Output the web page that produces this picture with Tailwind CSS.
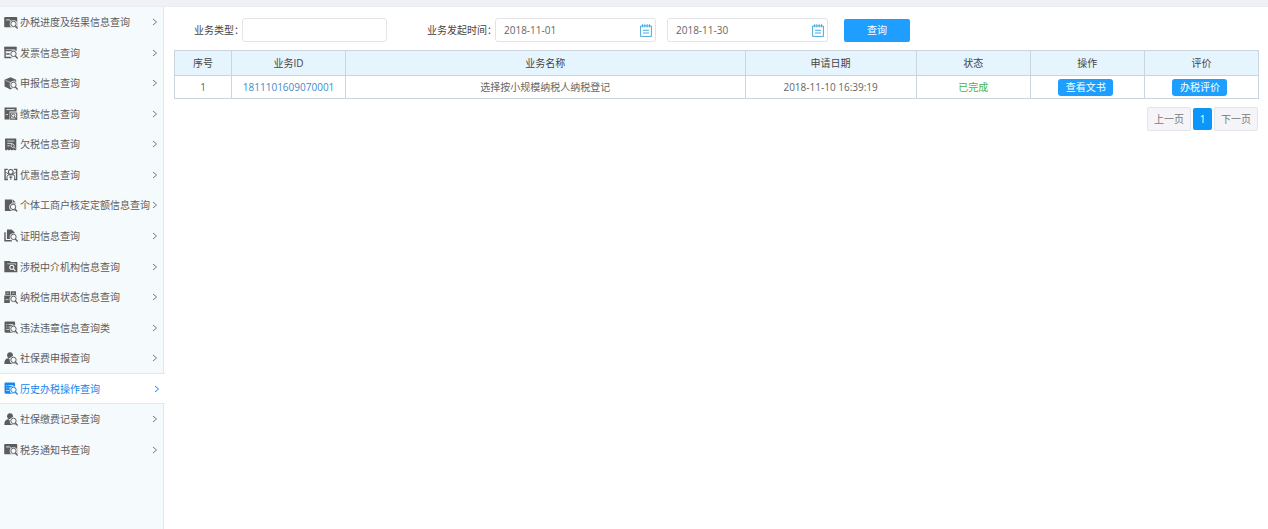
<!DOCTYPE html>
<html lang="zh-CN">
<head>
<meta charset="utf-8">
<meta name="viewport" content="width=device-width, initial-scale=1">
<title>历史办税操作查询</title>
<script src="https://cdn.jsdelivr.net/npm/@tailwindcss/browser@4"></script>
</head>
<body class="flex min-h-screen flex-col bg-white font-['Open_Sans','Noto_Sans_CJK_SC',sans-serif] text-[10px] leading-4 text-[#555]">
<svg class="hidden" aria-hidden="true">
  <symbol id="chevron" viewBox="0 0 6 8"><path d="M1 1l3.5 3L1 7" fill="none" stroke="currentColor" stroke-width="1"/></symbol>
  <symbol id="lens" viewBox="0 0 13 12"><circle cx="8.8" cy="7.3" r="3.5" fill="#f5fafd"/><circle cx="8.8" cy="7.3" r="2.5" fill="#f5fafd" stroke="currentColor" stroke-width=".9"/><path d="M10.5 9.2l2.2 2.4" stroke="currentColor" stroke-width="1.2"/></symbol>
  <symbol id="card" viewBox="0 0 13 12"><path fill="currentColor" d="M1 .8h10.5q.8 0 .8.8v8q0 .8-.8.8H1q-.8 0-.8-.8v-8Q.2.8 1 .8z"/><path d="M2 3.6h3.2l1.2 1" stroke="#f5fafd" stroke-width=".8" fill="none"/><use href="#lens"/></symbol>
  <symbol id="invoice" viewBox="0 0 13 12"><path fill="none" stroke="currentColor" stroke-width="1.3" d="M11 4.500V1.400H1v9.200h6M1 4.200h9M2 7.400h4"/><path d="M.4.8h11.200v2.300H.4z" fill="currentColor"/><use href="#lens"/></symbol>
  <symbol id="cube" viewBox="0 0 13 12"><path fill="currentColor" d="M6 .2l5.3 2.3v6L6 11.5.5 8.8V2.5z"/><path d="M1.500 3.200L6 5.100l4.500-1.900" stroke="#f5fafd" stroke-width=".5" fill="none"/><use href="#lens"/></symbol>
  <symbol id="payment" viewBox="0 0 13 12"><path fill="currentColor" d="M.5.4h11.200v3.800H.5zM.5 4.200h4.700v7.300H.5z"/><path d="M2.200 2.400h7.600M1.800 7h1.800" stroke="#f5fafd" stroke-width=".8"/><path d="M6.200 5.500h5.600v5.700H6.200z" fill="none" stroke="currentColor"/><circle cx="8.600" cy="8" r="1.500" fill="none" stroke="currentColor" stroke-width=".9"/><path d="M9.600 9.100l2.400 2.400" stroke="currentColor"/></symbol>
  <symbol id="arrears" viewBox="0 0 13 12"><path fill="currentColor" d="M1 .4h10.400v10.400l-1.200.8-1.300-1-1.500 1-1.400-1-1.400 1-1.300-1-1.100 1L1 10.800z"/><path d="M3 2.800h6.400M3 5h5M3 7.200h2.500" stroke="#f5fafd" stroke-width=".7"/><circle cx="8" cy="7.200" r="1.500" fill="currentColor" stroke="#f5fafd" stroke-width=".7"/><path d="M9 8.300l1.600 1.600" stroke="#f5fafd" stroke-width=".7"/></symbol>
  <symbol id="benefit" viewBox="0 0 13 12"><path d="M3.500 1.200H1v9.600h2.500M9.200 1.200h2.500v9.600H9.200" fill="none" stroke="currentColor" stroke-width="1.300"/><circle cx="6.300" cy="3.600" r="2.200" fill="none" stroke="currentColor"/><path d="M2.800 10.800V8q0-1.700 1.800-1.700h3.500q1.800 0 1.800 1.700v2.800M2 4l2.500 2M10.800 4L8 6M4.800 8.500h3M6.300 7v4" fill="none" stroke="currentColor" stroke-width=".9"/></symbol>
  <symbol id="document" viewBox="0 0 13 12"><path fill="currentColor" d="M.8.4h6.800v3h3V11.200H.8z"/><path fill="currentColor" d="M8.100.4l2.600 2.500H8.100z"/><use href="#lens" x="-.4"/></symbol>
  <symbol id="proof" viewBox="0 0 13 12"><path fill="currentColor" d="M2.700.4H7l2.800 2.600v6.300H2.700z"/><path d="M.9 3v7.900h6.500" stroke="currentColor" stroke-width="1.300" fill="none"/><use href="#lens"/></symbol>
  <symbol id="folder" viewBox="0 0 13 12"><path fill="currentColor" d="M.3.800h5.200l.9 1.100h6v9.500H.3z"/><path d="M3 3.500h7.700v1" stroke="#f5fafd" stroke-width=".6" fill="none"/><circle cx="7.300" cy="6.700" r="1.900" fill="none" stroke="#f5fafd" stroke-width="1"/><path d="M8.700 8.100l1.900 2" stroke="#f5fafd" stroke-width="1"/></symbol>
  <symbol id="credit" viewBox="0 0 13 12"><path fill="currentColor" d="M1.200.2h4.600v3.400H1.200zM6.400.2h4.700v3.400H6.400zM.2 4.100h11.300v1.800H.2zM.2 5.900h5.200v5.300H.2z"/><path d="M2.400 2h2M7.400 2h2.400M1.400 8h2.800" stroke="#f5fafd" stroke-width=".6"/><use href="#lens"/></symbol>
  <symbol id="record" viewBox="0 0 13 12"><path fill="currentColor" d="M1.500.5h7.800q1 0 1 1v9.300H1.500q-1 0-1-1V1.500q0-1 1-1z"/><path d="M2.100 3.200h1M4.200 3.200h4.400M2.100 5.500h1M4.200 5.500h1.600M2.100 7.800h2.600" stroke="#f5fafd" stroke-width=".7"/><use href="#lens"/></symbol>
  <symbol id="person" viewBox="0 0 13 12"><circle cx="5.600" cy="2.900" r="2.700" fill="currentColor"/><path fill="currentColor" d="M.3 11Q.2 6.300 4 5.600l1.600 1.400L7.300 5.600q3.400.6 3.400 5.400z"/><use href="#lens"/></symbol>
  <symbol id="calendar" viewBox="0 0 12 13"><path d="M.6 2h10.800v10.400H.6zM2.600.2v3.200M4.900.2v3.200M7.200.2v3.200M9.500.2v3.200M3 6.300h6M3 9h6" fill="none" stroke="currentColor" stroke-width="1"/></symbol>
</svg>

<header class="h-[7px] border-b border-[#e9edf2] bg-[#eff1f6]"></header>
<div class="flex flex-1">
  <nav class="w-41 shrink-0 bg-[linear-gradient(to_right,#f5fafd_163px,#dfe6ec_163px)]" aria-label="查询菜单">
    <ul class="grid h-[458px] auto-rows-fr text-[#5c5c5c]">
      <li class="flex"><a href="#" class="flex flex-1 items-center gap-0.5 pl-1 pr-[7px] whitespace-nowrap"><svg class="h-[13px] w-3.5"><use href="#card"/></svg><span class="flex-1">办税进度及结果信息查询</span><svg class="h-2 w-1.5 text-[#777]"><use href="#chevron"/></svg></a></li>
      <li class="flex"><a href="#" class="flex flex-1 items-center gap-0.5 pl-1 pr-[7px] whitespace-nowrap"><svg class="h-[13px] w-3.5"><use href="#invoice"/></svg><span class="flex-1">发票信息查询</span><svg class="h-2 w-1.5 text-[#777]"><use href="#chevron"/></svg></a></li>
      <li class="flex"><a href="#" class="flex flex-1 items-center gap-0.5 pl-1 pr-[7px] whitespace-nowrap"><svg class="h-[13px] w-3.5"><use href="#cube"/></svg><span class="flex-1">申报信息查询</span><svg class="h-2 w-1.5 text-[#777]"><use href="#chevron"/></svg></a></li>
      <li class="flex"><a href="#" class="flex flex-1 items-center gap-0.5 pl-1 pr-[7px] whitespace-nowrap"><svg class="h-[13px] w-3.5"><use href="#payment"/></svg><span class="flex-1">缴款信息查询</span><svg class="h-2 w-1.5 text-[#777]"><use href="#chevron"/></svg></a></li>
      <li class="flex"><a href="#" class="flex flex-1 items-center gap-0.5 pl-1 pr-[7px] whitespace-nowrap"><svg class="h-[13px] w-3.5"><use href="#arrears"/></svg><span class="flex-1">欠税信息查询</span><svg class="h-2 w-1.5 text-[#777]"><use href="#chevron"/></svg></a></li>
      <li class="flex"><a href="#" class="flex flex-1 items-center gap-0.5 pl-1 pr-[7px] whitespace-nowrap"><svg class="h-[13px] w-3.5"><use href="#benefit"/></svg><span class="flex-1">优惠信息查询</span><svg class="h-2 w-1.5 text-[#777]"><use href="#chevron"/></svg></a></li>
      <li class="flex"><a href="#" class="flex flex-1 items-center gap-0.5 pl-1 pr-[7px] whitespace-nowrap"><svg class="h-[13px] w-3.5 shrink-0"><use href="#document"/></svg><span class="min-w-0 flex-1">个体工商户核定定额信息查询</span><svg class="h-2 w-1.5 shrink-0 text-[#777]"><use href="#chevron"/></svg></a></li>
      <li class="flex"><a href="#" class="flex flex-1 items-center gap-0.5 pl-1 pr-[7px] whitespace-nowrap"><svg class="h-[13px] w-3.5"><use href="#proof"/></svg><span class="flex-1">证明信息查询</span><svg class="h-2 w-1.5 text-[#777]"><use href="#chevron"/></svg></a></li>
      <li class="flex"><a href="#" class="flex flex-1 items-center gap-0.5 pl-1 pr-[7px] whitespace-nowrap"><svg class="h-[13px] w-3.5"><use href="#folder"/></svg><span class="flex-1">涉税中介机构信息查询</span><svg class="h-2 w-1.5 text-[#777]"><use href="#chevron"/></svg></a></li>
      <li class="flex"><a href="#" class="flex flex-1 items-center gap-0.5 pl-1 pr-[7px] whitespace-nowrap"><svg class="h-[13px] w-3.5"><use href="#credit"/></svg><span class="flex-1">纳税信用状态信息查询</span><svg class="h-2 w-1.5 text-[#777]"><use href="#chevron"/></svg></a></li>
      <li class="flex"><a href="#" class="flex flex-1 items-center gap-0.5 pl-1 pr-[7px] whitespace-nowrap"><svg class="h-[13px] w-3.5"><use href="#record"/></svg><span class="flex-1">违法违章信息查询类</span><svg class="h-2 w-1.5 text-[#777]"><use href="#chevron"/></svg></a></li>
      <li class="flex"><a href="#" class="flex flex-1 items-center gap-0.5 pl-1 pr-[7px] whitespace-nowrap"><svg class="h-[13px] w-3.5"><use href="#person"/></svg><span class="flex-1">社保费申报查询</span><svg class="h-2 w-1.5 text-[#777]"><use href="#chevron"/></svg></a></li>
      <li class="flex"><a href="#" aria-current="page" class="flex flex-1 items-center gap-0.5 border-y border-[#e1e7ec] bg-white pl-1 pr-[5px] whitespace-nowrap text-[#1386f0]"><svg class="h-[13px] w-3.5"><use href="#record"/></svg><span class="flex-1">历史办税操作查询</span><svg class="h-2 w-1.5"><use href="#chevron"/></svg></a></li>
      <li class="flex"><a href="#" class="flex flex-1 items-center gap-0.5 pl-1 pr-[7px] whitespace-nowrap"><svg class="h-[13px] w-3.5"><use href="#person"/></svg><span class="flex-1">社保缴费记录查询</span><svg class="h-2 w-1.5 text-[#777]"><use href="#chevron"/></svg></a></li>
      <li class="flex"><a href="#" class="flex flex-1 items-center gap-0.5 pl-1 pr-[7px] whitespace-nowrap"><svg class="h-[13px] w-3.5"><use href="#card"/></svg><span class="flex-1">税务通知书查询</span><svg class="h-2 w-1.5 text-[#777]"><use href="#chevron"/></svg></a></li>
    </ul>
  </nav>

  <main class="min-w-0 flex-1 pt-[11px] pr-[9px] pl-2.5">
    <form class="flex items-center pl-5 text-[#444]">
      <label for="type" class="w-12 whitespace-nowrap">业务类型：</label>
      <input id="type" type="text" class="h-6 w-[145px] rounded-[3px] border border-[#e2e4e8] px-2 outline-none">
      <label for="start" class="ml-10 w-[68px] whitespace-nowrap">业务发起时间：</label>
      <div class="flex h-6 w-[161px] items-center rounded-[3px] border border-[#e2e4e8] pr-[3px] pl-2">
        <input id="start" type="text" value="2018-11-01" class="min-w-0 flex-1 text-[#666] outline-none">
        <button type="button" aria-label="选择开始日期" class="text-[#45aade]"><svg class="h-[13px] w-3"><use href="#calendar"/></svg></button>
      </div>
      <div class="ml-[11px] flex h-6 w-[161px] items-center rounded-[3px] border border-[#e2e4e8] pr-[3px] pl-2">
        <input id="end" type="text" aria-label="结束日期" value="2018-11-30" class="min-w-0 flex-1 text-[#666] outline-none">
        <button type="button" aria-label="选择结束日期" class="text-[#45aade]"><svg class="h-[13px] w-3"><use href="#calendar"/></svg></button>
      </div>
      <button type="submit" class="ml-4 h-[23px] w-[66px] rounded-xs bg-[#1e9fff] text-white">查询</button>
    </form>

    <table class="mt-2 w-full table-fixed border-collapse text-center text-[#666] [&_td]:border [&_td]:border-[#cbd5e0] [&_th]:border [&_th]:border-[#cbd5e0] [&_th]:font-normal">
      <colgroup><col class="w-1/19"><col class="w-2/19"><col class="w-7/19"><col class="w-3/19"><col class="w-2/19"><col class="w-2/19"><col class="w-2/19"></colgroup>
      <thead>
        <tr class="h-[25px] bg-[#e5f4fd] text-[#444]"><th scope="col">序号</th><th scope="col">业务ID</th><th scope="col">业务名称</th><th scope="col">申请日期</th><th scope="col">状态</th><th scope="col">操作</th><th scope="col">评价</th></tr>
      </thead>
      <tbody>
        <tr class="h-[23px]">
          <td>1</td>
          <td><a href="#" class="text-[#428bca]">1811101609070001</a></td>
          <td>选择按小规模纳税人纳税登记</td>
          <td>2018-11-10 16:39:19</td>
          <td class="text-[#44b549]">已完成</td>
          <td class="pr-[3px]"><button type="button" class="mx-auto block h-[17px] w-[55px] rounded-[3px] bg-[#1e9fff] text-white">查看文书</button></td>
          <td class="pr-[3px]"><button type="button" class="mx-auto block h-[17px] w-[55px] rounded-[3px] bg-[#1e9fff] text-white">办税评价</button></td>
        </tr>
      </tbody>
    </table>

    <nav class="mt-2 flex items-center justify-end gap-0.5 pr-px text-[#777]" aria-label="分页">
      <button type="button" class="h-6 w-11 rounded-xs border border-[#e4e5ea] bg-[#f5f5f9]">上一页</button>
      <button type="button" aria-current="page" class="h-[22px] w-[19px] rounded-xs bg-[#0c96fa] text-white">1</button>
      <button type="button" class="h-6 w-11 rounded-xs border border-[#e4e5ea] bg-[#f5f5f9]">下一页</button>
    </nav>
  </main>
</div>
</body>
</html>
